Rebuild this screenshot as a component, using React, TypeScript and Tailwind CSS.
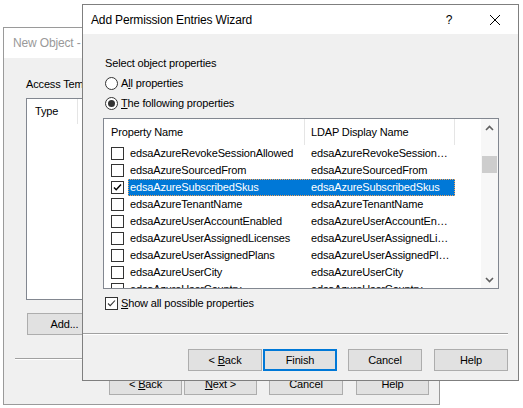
import { ReactNode } from "react";

type Row = { name: string; ldap: string; checked?: boolean; selected?: boolean };

const rows: Row[] = [
  { name: "edsaAzureRevokeSessionAllowed", ldap: "edsaAzureRevokeSession…" },
  { name: "edsaAzureSourcedFrom", ldap: "edsaAzureSourcedFrom" },
  {
    name: "edsaAzureSubscribedSkus",
    ldap: "edsaAzureSubscribedSkus",
    checked: true,
    selected: true,
  },
  { name: "edsaAzureTenantName", ldap: "edsaAzureTenantName" },
  { name: "edsaAzureUserAccountEnabled", ldap: "edsaAzureUserAccountEn…" },
  { name: "edsaAzureUserAssignedLicenses", ldap: "edsaAzureUserAssignedLi…" },
  { name: "edsaAzureUserAssignedPlans", ldap: "edsaAzureUserAssignedPl…" },
  { name: "edsaAzureUserCity", ldap: "edsaAzureUserCity" },
  { name: "edsaAzureUserCountry", ldap: "edsaAzureUserCountry" },
];

function App() {
  return (
    <div className="relative w-[523px] h-[408px] overflow-hidden bg-white text-black font-['Liberation_Sans',Arial,sans-serif] text-[11px] tracking-[-0.15px]">
      <NewObjectWindow />
      <WizardDialog />
    </div>
  );
}

export default App;

function NewObjectWindow() {
  return (
    <div className="absolute left-[3px] top-[27px] w-[437px] h-[378px] border border-[#9a9a9a] bg-[#f0f0f0] flex flex-col">
      <div className="h-[30px] bg-white flex items-center pl-[9px] text-[12px] text-[#999]">
        New Object - Access Template
      </div>
      <div className="flex-1 flex flex-col">
        <div className="mt-[16px] h-[20px] pl-[22px] flex items-center">
          Access Template:
        </div>
        <div className="mt-[4px] ml-[22px] mr-[20px] h-[202px] border border-[#828790] bg-white">
          <div className="h-[25px] flex">
            <div className="w-[51px] pl-[8px] flex items-center border-r border-[#e5e5e5]">
              Type
            </div>
            <div className="w-[200px] pl-[6px] flex items-center border-r border-[#e5e5e5]">
              Name
            </div>
          </div>
        </div>
        <div className="mt-[13px] ml-[23px] flex">
          <Button width="w-[75px]">Add...</Button>
        </div>
        <div className="mt-[23px] ml-[11px] mr-[10px] h-[2px] border-t border-[#a0a0a0] border-b border-b-white" />
        <div className="mt-[13px] flex pl-[105px]">
          <Button width="w-[73px]">
            {"< "}
            <u>B</u>ack
          </Button>
          <div className="ml-[2px]">
            <Button width="w-[73px]">
              <u>N</u>
              {"ext >"}
            </Button>
          </div>
          <div className="ml-[12px]">
            <Button width="w-[74px]">Cancel</Button>
          </div>
          <div className="ml-[13px]">
            <Button width="w-[73px]">Help</Button>
          </div>
        </div>
      </div>
    </div>
  );
}

function WizardDialog() {
  return (
    <div className="absolute left-[82px] top-[4px] w-[437px] h-[377px] border border-[#7f7f7f] bg-[#f0f0f0] flex flex-col">
      <div className="h-[29px] bg-white flex items-center">
        <span className="pl-[8px] text-[12px] flex-1">
          Add Permission Entries Wizard
        </span>
        <span className="w-[46px] h-full flex items-center justify-center text-[12px]">
          ?
        </span>
        <span className="w-[46px] h-full flex items-center justify-center">
          <svg width="10" height="10" viewBox="0 0 10 10">
            <path d="M0 0 L10 10 M10 0 L0 10" stroke="#000" strokeWidth="1" />
          </svg>
        </span>
      </div>

      <div className="flex-1 flex flex-col">
        <div className="mt-[19px] h-[20px] pl-[22px] flex items-center">
          Select object properties
        </div>
        <div className="h-[20px] pl-[22px] flex items-center gap-[3px]">
          <Radio />
          <span>
            A<u>l</u>l properties
          </span>
        </div>
        <div className="h-[20px] pl-[22px] flex items-center gap-[3px]">
          <Radio checked />
          <span>
            <u>T</u>he following properties
          </span>
        </div>

        <PropertyList />

        <div className="mt-[4px] h-[20px] pl-[22px] flex items-center gap-[3px]">
          <CheckBox checked thin />
          <span>
            <u>S</u>how all possible properties
          </span>
        </div>

        <div className="mt-[20px] w-[425px] h-[2px] border-t border-[#a0a0a0] border-b border-b-white" />

        <div className="mt-[14px] flex pl-[105px]">
          <Button width="w-[74px]">
            {"< "}
            <u>B</u>ack
          </Button>
          <div className="ml-[1px]">
            <Button width="w-[74px]" primary>
              Finish
            </Button>
          </div>
          <div className="ml-[11px]">
            <Button width="w-[74px]">Cancel</Button>
          </div>
          <div className="ml-[12px]">
            <Button width="w-[74px]">Help</Button>
          </div>
        </div>
      </div>
    </div>
  );
}

function PropertyList() {
  return (
    <div className="mt-[5px] ml-[20px] w-[396px] h-[171px] border border-[#828790] bg-white flex">
      <div className="flex-1 flex flex-col overflow-hidden">
        <div className="h-[26px] shrink-0 flex">
          <div className="w-[201px] pl-[7px] flex items-center border-r border-[#e5e5e5]">
            Property Name
          </div>
          <div className="w-[150px] pl-[6px] flex items-center border-r border-[#e5e5e5]">
            LDAP Display Name
          </div>
        </div>
        {rows.map((row) => (
          <div key={row.name} className="h-[17px] shrink-0 flex items-center">
            <div className="w-[24px] pl-[7px] flex items-center">
              <CheckBox checked={row.checked} />
            </div>
            <div
              className={
                row.selected
                  ? "w-[327px] h-[17px] flex items-center bg-[#0078d7] text-white outline-1 outline-dotted outline-[#f3a45a] -outline-offset-1"
                  : "w-[327px] h-[17px] flex items-center"
              }
            >
              <span className="w-[177px] pl-[2px] whitespace-nowrap overflow-hidden">
                {row.name}
              </span>
              <span className="w-[150px] pl-[6px] whitespace-nowrap overflow-hidden">
                {row.ldap}
              </span>
            </div>
          </div>
        ))}
      </div>
      <ScrollBar />
    </div>
  );
}

function ScrollBar() {
  return (
    <div className="w-[17px] h-full flex flex-col bg-[#f7f7f7]">
      <div className="h-[17px] flex items-center justify-center">
        <svg width="9" height="6" viewBox="0 0 9 6">
          <path d="M1 5 L4.5 1.5 L8 5" stroke="#606060" strokeWidth="1.6" fill="none" />
        </svg>
      </div>
      <div className="flex-1">
        <div className="mt-[20px] mx-[1px] h-[17px] bg-[#cdcdcd]" />
      </div>
      <div className="h-[17px] flex items-center justify-center">
        <svg width="9" height="6" viewBox="0 0 9 6">
          <path d="M1 1 L4.5 4.5 L8 1" stroke="#606060" strokeWidth="1.6" fill="none" />
        </svg>
      </div>
    </div>
  );
}

function Radio({ checked }: { checked?: boolean }) {
  return (
    <span className="w-[13px] h-[13px] rounded-full border border-[#333] bg-white flex items-center justify-center shrink-0">
      {checked && <span className="w-[7px] h-[7px] rounded-full bg-[#333]" />}
    </span>
  );
}

function CheckBox({ checked, thin }: { checked?: boolean; thin?: boolean }) {
  return (
    <span className="w-[13px] h-[13px] border border-[#333] bg-white flex items-center justify-center shrink-0">
      {checked && (
        <svg width="11" height="11" viewBox="0 0 11 11">
          <path
            d="M2 5.5 L4.2 7.7 L9 2.5"
            stroke={thin ? "#333" : "#000"}
            strokeWidth={thin ? "1.1" : "1.5"}
            fill="none"
          />
        </svg>
      )}
    </span>
  );
}

function Button({
  children,
  width,
  primary,
}: {
  children: ReactNode;
  width: string;
  primary?: boolean;
}) {
  return (
    <div
      className={`${width} h-[22px] flex items-center justify-center whitespace-pre bg-[#e1e1e1] ${
        primary ? "border-2 border-[#0078d7]" : "border border-[#adadad]"
      }`}
    >
      {children}
    </div>
  );
}
